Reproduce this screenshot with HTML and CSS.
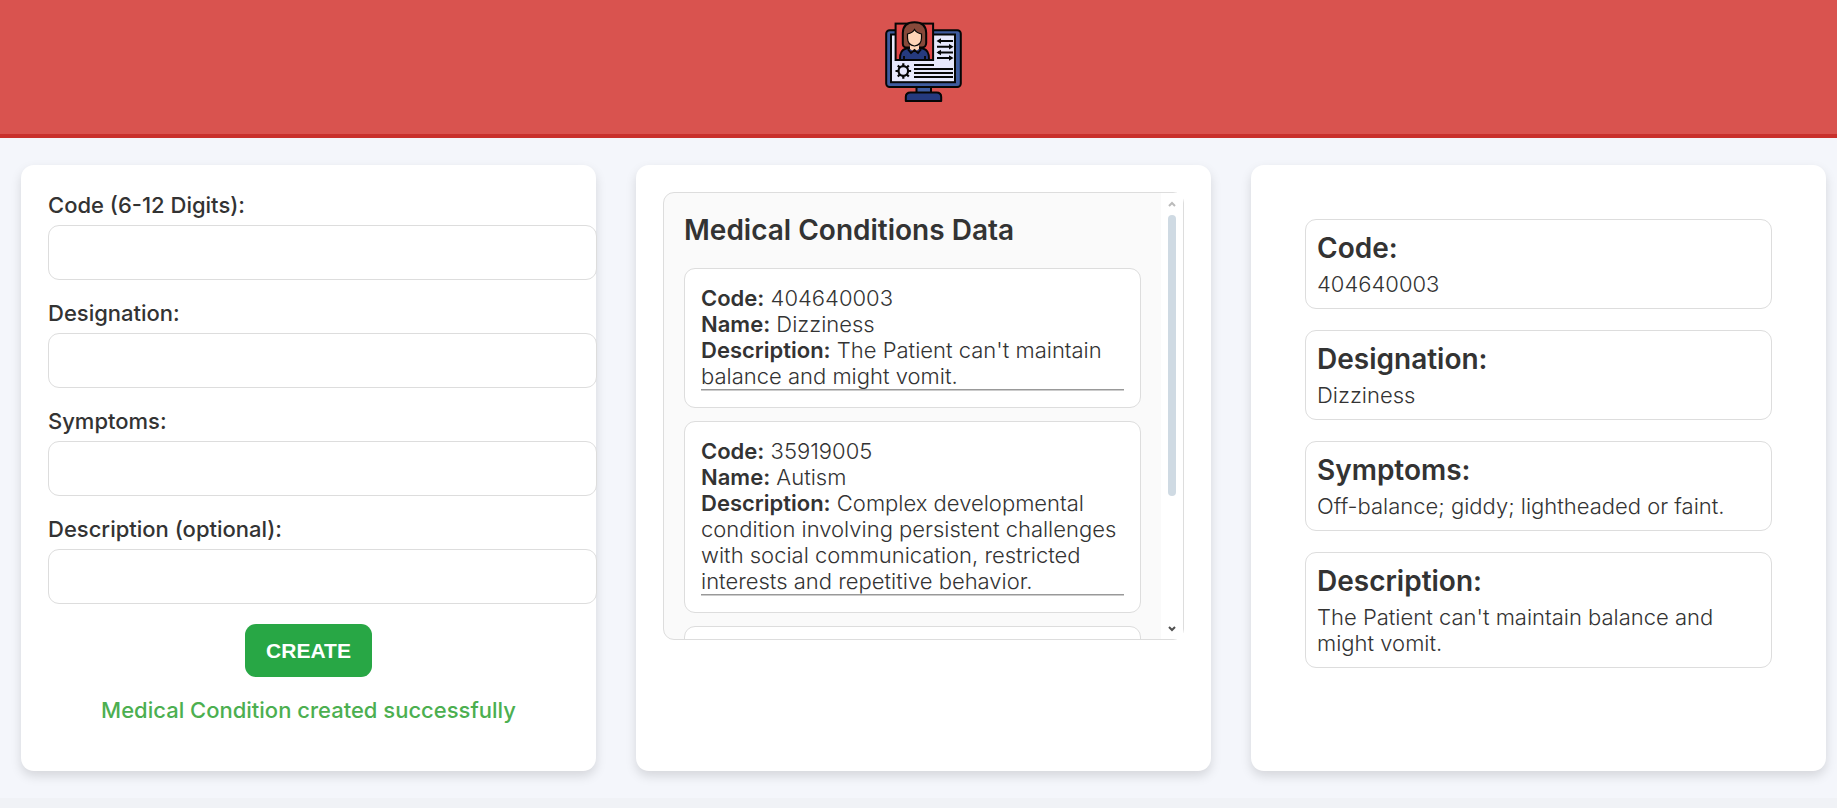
FILE: index.html
```html
<!DOCTYPE html>
<html lang="en">
<head>
<meta charset="utf-8">
<meta name="viewport" content="width=device-width, initial-scale=1">
<title>Medical Conditions</title>
<link rel="stylesheet" href="styles.css">
</head>
<body>
<header class="header">
  <svg class="logo" viewBox="10 8 87 87" role="img" aria-label="Patient record">
    <g stroke="#060606" stroke-width="2">
      <rect x="46.500" y="76" width="14.500" height="8" fill="#3f5c9f"/>
      <path d="M35.800 91V87Q35.800 82.500 40.500 82.500H66.500Q71.200 82.500 71.200 87V91Z" fill="#253a7e" stroke-linejoin="round"/>
      <rect x="16.200" y="20.300" width="74.600" height="56.700" rx="3.500" fill="#3f5c9f"/>
      <rect x="21" y="24.500" width="64" height="47.700" fill="#e7e8fc"/>
      <rect x="25.600" y="13.600" width="37.500" height="36.400" fill="#e04848"/>
      <path d="M32.800 34V23Q33 12.200 44.500 12.200T56.200 23V33Q56 37.500 52 37.500H37Q33 37.500 32.800 34Z" fill="#87493a"/>
      <path d="M30 50Q29.500 40 36 38.500L44.500 38L53 38.500Q59.500 40 59 50Z" fill="#253a7e"/>
      <path d="M40 35H49V39L44.500 42L40 39Z" fill="#ffd5b8" stroke="none"/>
      <path d="M37.500 24Q42.500 23 44.500 19.500Q46.500 23 51.500 24V28Q51.500 35 44.500 36Q37.500 35 37.500 28Z" fill="#ffd5b8" stroke-width="1.200"/>
      <path d="M38 39.500L41 43L44.500 40L48 43L51 39.500M34 49V46M55 49V46" fill="none" stroke-width="1.800"/>
      <path d="M68 31H83M67 36.800H81M68 42.500H83M67 48H81M44 55H64M44 59H83M44 63H83M44 67H83" fill="none"/>
      <circle cx="33.300" cy="61" r="4.800" fill="#e7e8fc" stroke-width="2.200"/>
      <path d="M33.300 53.200V56M33.300 66V68.800M25.500 61H28.300M38.300 61H41.100M27.800 55.500L30 57.700M36.600 64.300L38.800 66.500M38.800 55.500L36.600 57.700M30 64.300L27.800 66.500" stroke-width="2.200"/>
    </g>
    <path d="M66.500 31L71 28.300V33.700ZM83.500 36.800L79 34.100V39.500ZM66.500 42.500L71 39.800V45.200ZM83.500 48L79 45.300V50.700Z" fill="#060606"/>
  </svg>
</header>

<main class="columns">
  <section class="card">
    <form class="form">
      <div class="field"><label for="code">Code (6-12 Digits):</label><input id="code" type="text"></div>
      <div class="field"><label for="designation">Designation:</label><input id="designation" type="text"></div>
      <div class="field"><label for="symptoms">Symptoms:</label><input id="symptoms" type="text"></div>
      <div class="field"><label for="description">Description (optional):</label><input id="description" type="text"></div>
      <button class="create" type="button">CREATE</button>
      <p class="status" role="status">Medical Condition created successfully</p>
    </form>
  </section>

  <section class="card">
    <div class="list">
      <div class="list-content">
        <h2 class="title">Medical Conditions Data</h2>
        <article class="condition">
          <p><strong>Code:</strong> 404640003</p>
          <p><strong>Name:</strong> Dizziness</p>
          <p><strong>Description:</strong> The Patient can't maintain balance and might vomit.</p>
          <hr>
        </article>
        <article class="condition">
          <p><strong>Code:</strong> 35919005</p>
          <p><strong>Name:</strong> Autism</p>
          <p><strong>Description:</strong> Complex developmental condition involving persistent challenges with social communication, restricted interests and repetitive behavior.</p>
          <hr>
        </article>
        <article class="condition"></article>
      </div>
      <div class="scrollbar" aria-hidden="true">
        <svg class="arrow up" viewBox="0 0 8 8"><path d="M1 6L4 3L7 6"/></svg>
        <div class="track"><div class="thumb"></div></div>
        <svg class="arrow" viewBox="0 0 8 8"><path d="M1 3L4 6L7 3"/></svg>
      </div>
    </div>
  </section>

  <section class="card">
    <div class="details">
      <div class="detail"><h2>Code:</h2><p>404640003</p></div>
      <div class="detail"><h2>Designation:</h2><p>Dizziness</p></div>
      <div class="detail"><h2>Symptoms:</h2><p>Off-balance; giddy; lightheaded or faint.</p></div>
      <div class="detail"><h2>Description:</h2><p>The Patient can't maintain balance and might vomit.</p></div>
    </div>
  </section>
</main>
</body>
</html>
```

FILE: styles.css
```css
* {
  box-sizing: border-box;
}

body {
  margin: 0;
  background: #f0f2f6;
  color: #333;
  font: 300 22px/26px Inter, "Liberation Sans", sans-serif;
}

h2,
p {
  margin: 0;
}

h2 {
  font-size: 28px;
  line-height: 34px;
  font-weight: 600;
}

.header {
  display: flex;
  justify-content: center;
  padding: 18px 11px 29px 21px;
  background: #d9534f;
  border-bottom: 4px solid #c9302c;
}

.logo {
  width: 87px;
  height: 87px;
}

.columns {
  display: grid;
  grid-template-columns: repeat(3, minmax(0, 1fr));
  gap: 40px;
  padding: 27px 11px 27px 21px;
  background: #f4f6fb;
}

.card {
  padding: 27px;
  background: #fff;
  border-radius: 13px;
  box-shadow: 0 5px 11px rgba(0, 0, 0, 0.13);
}

.form {
  display: flex;
  flex-direction: column;
  gap: 20px;
  padding-bottom: 21px;
}

.field {
  display: flex;
  flex-direction: column;
  gap: 7px;
  font-weight: 500;
}

.field input {
  box-sizing: content-box;
  width: 100%;
  height: 27px;
  padding: 13px;
  border: 1px solid #ddd;
  border-radius: 11px;
  background: #fff;
  color: inherit;
  font: inherit;
}

.create {
  align-self: center;
  padding: 13px 21px;
  border: 0;
  border-radius: 11px;
  background: #28a745;
  color: #fff;
  font: bold 21px/27px "Liberation Sans", Arial, sans-serif;
}

.status {
  color: #4caf50;
  font-weight: 500;
  text-align: center;
}

.list {
  display: flex;
  height: 448px;
  border: 1px solid #ddd;
  border-radius: 11px;
  background: #fafafa;
}

.list-content {
  flex: 1;
  min-width: 0;
  padding: 20px;
  overflow: hidden;
}

.title {
  margin-bottom: 21px;
}

.condition {
  min-height: 120px;
  margin-bottom: 13px;
  padding: 16px;
  border: 1px solid #ddd;
  border-radius: 11px;
  background: #fff;
}

.condition strong {
  font-weight: 600;
}

.condition hr {
  height: 2px;
  margin: 0;
  border: 0;
  border-top: 1px solid #999;
  border-bottom: 1px solid #ccc;
}

.scrollbar {
  display: flex;
  flex-direction: column;
  align-items: center;
  width: 22px;
  padding: 7px 0;
  background: #fff;
}

.arrow {
  width: 8px;
  height: 8px;
  fill: none;
  stroke: #505050;
  stroke-width: 2;
}

.up {
  stroke: #bbb;
}

.track {
  flex: 1;
  width: 8px;
  padding: 7px 0;
}

.thumb {
  height: 70%;
  border-radius: 4px;
  background: #cfdae3;
}

.details {
  display: flex;
  flex-direction: column;
  gap: 21px;
  padding: 27px;
}

.detail {
  display: flex;
  flex-direction: column;
  gap: 6px;
  padding: 11px;
  border: 1px solid #ddd;
  border-radius: 11px;
}
```
